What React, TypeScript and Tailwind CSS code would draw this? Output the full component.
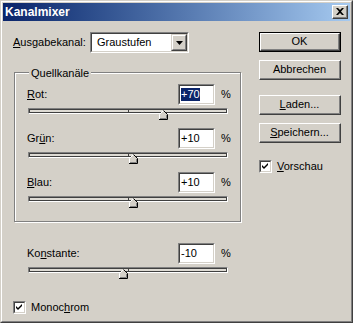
import React from 'react'

const font = { fontFamily: '"Liberation Sans", Arial, sans-serif' }

function U({ children }: { children: React.ReactNode }) {
  return <span className="underline underline-offset-[1px]">{children}</span>
}

function Sunken({ className = '', children }: { className?: string; children?: React.ReactNode }) {
  return (
    <div className={`border border-t-[#808080] border-l-[#808080] border-b-white border-r-white ${className}`}>
      <div className="flex h-full w-full border border-t-[#404040] border-l-[#404040] border-b-[#d4d0c8] border-r-[#d4d0c8] bg-white">{children}</div>
    </div>
  )
}

function Button({ label, def = false }: { label: React.ReactNode; def?: boolean }) {
  const inner = (
    <div className="h-full w-full border border-t-white border-l-white border-b-[#404040] border-r-[#404040]">
      <div className="flex h-full w-full items-center justify-center border-b border-r border-[#808080] text-[11px] text-black">{label}</div>
    </div>
  )
  return def ? <div className="h-[20px] w-[82px] border border-black">{inner}</div> : <div className="h-[20px] w-[82px]">{inner}</div>
}

function Check({ label }: { label: React.ReactNode }) {
  return (
    <div className="flex items-center gap-[5px] text-[11px]">
      <Sunken className="h-[13px] w-[13px]">
        <svg width="9" height="9" viewBox="0 0 9 9" className="m-auto">
          <path d="M1 3 L3 5 L7 1 L7 3 L3 7 L1 5 Z" fill="#000" />
        </svg>
      </Sunken>
      <span>{label}</span>
    </div>
  )
}

function Slider({ value }: { value: number }) {
  const center = 100 + value / 2
  return (
    <div className="h-[23px] pt-[3px] pl-px">
      <div className="relative h-[6px] w-[200px] border border-t-[#808080] border-l-[#808080] border-b-white border-r-white">
        <div className="h-full w-full border border-[#404040] bg-[#dedbd4]" />
        <div className="absolute left-[99px] top-0 h-full w-px bg-[#404040]" />
        <svg width="9" height="10" viewBox="0 0 9 10" className="absolute top-[1px]" style={{ left: center - 5 }}>
          <path d="M0.5 9.5 L0.5 4.5 L4.5 0.5 L8.5 4.5 L8.5 9.5 Z" fill="#d4d0c8" />
          <path d="M0.5 9 L0.5 4.5 L4.5 0.5" fill="none" stroke="#fff" />
          <path d="M4.5 0.5 L8.5 4.5 L8.5 9.5 L0 9.5" fill="none" stroke="#000" />
          <path d="M7.5 5 L7.5 8.5 L1 8.5" fill="none" stroke="#808080" />
        </svg>
      </div>
    </div>
  )
}

function ValueRow({ label, value, selected = false }: { label: React.ReactNode; value: string; selected?: boolean }) {
  return (
    <div className="flex h-[21px] items-center text-[11px]">
      <span className="w-[151px]">{label}</span>
      <Sunken className="h-[21px] w-[37px]">
        <div className="flex items-center pl-[1px]">
          <span className={selected ? 'bg-[#0a246a] leading-[13px] text-white' : 'leading-[13px]'}>{value}</span>
        </div>
      </Sunken>
      <span className="ml-[6px]">%</span>
    </div>
  )
}

export default function App() {
  return (
    <div style={font} className="h-[323px] w-[353px] border border-t-[#d4d0c8] border-l-[#d4d0c8] border-b-[#404040] border-r-[#404040] bg-[#d4d0c8] text-black">
      <div className="h-full w-full border border-t-white border-l-white border-b-[#808080] border-r-[#808080] p-px">
        <div className="flex h-[18px] items-center justify-between bg-gradient-to-r from-[#0a246a] to-[#a6caf0] pl-[2px] pr-[2px]">
          <span className="text-[12px] font-bold text-white">Kanalmixer</span>
          <div className="h-[14px] w-[16px] border border-t-white border-l-white border-b-[#404040] border-r-[#404040] bg-[#d4d0c8]">
            <div className="flex h-full w-full items-center justify-center border-b border-r border-[#808080]">
              <svg width="8" height="7" viewBox="0 0 8 7">
                <path d="M0 0 H2 L4 2 L6 0 H8 L5 3.5 L8 7 H6 L4 5 L2 7 H0 L3 3.5 Z" fill="#000" />
              </svg>
            </div>
          </div>
        </div>

        <div className="flex pl-[10px] pt-[11px]">
          <div className="w-[229px]">
            <div className="flex h-[21px] items-center text-[11px]">
              <span className="w-[77px]"><U>A</U>usgabekanal:</span>
              <Sunken className="h-[21px] w-[99px]">
                <span className="flex-1 self-center pl-[5px]">Graustufen</span>
                <div className="h-full w-[16px] border border-t-[#d4d0c8] border-l-[#d4d0c8] border-b-[#404040] border-r-[#404040] bg-[#d4d0c8]">
                  <div className="flex h-full w-full items-center justify-center border border-t-white border-l-white border-b-[#808080] border-r-[#808080]">
                    <svg width="7" height="4" viewBox="0 0 7 4"><path d="M0 0 H7 L3.5 4 Z" fill="#000" /></svg>
                  </div>
                </div>
              </Sunken>
            </div>

            <div className="relative ml-px mt-[19px] h-[150px] w-[227px] border border-[#808080] pl-[12px] pt-[11px] shadow-[inset_1px_1px_0_#fff,1px_1px_0_#fff]">
              <span className="absolute -top-[8px] left-[14px] bg-[#d4d0c8] px-[2px] text-[11px]">Quellkanäle</span>
              <ValueRow label={<><U>R</U>ot:</>} value="+70" selected />
              <Slider value={70} />
              <ValueRow label={<>Gr<U>ü</U>n:</>} value="+10" />
              <Slider value={10} />
              <ValueRow label={<><U>B</U>lau:</>} value="+10" />
              <Slider value={10} />
            </div>

            <div className="mt-[21px] pl-[14px]">
              <ValueRow label={<>Ko<U>n</U>stante:</>} value="-10" />
              <Slider value={-10} />
            </div>

            <div className="mt-[12px]">
              <Check label={<>Monoc<U>h</U>rom</>} />
            </div>
          </div>

          <div className="ml-[17px] flex flex-col">
            <Button label="OK" def />
            <div className="mt-[8px]"><Button label="Abbrechen" /></div>
            <div className="mt-[15px]"><Button label={<><U>L</U>aden...</>} /></div>
            <div className="mt-[8px]"><Button label={<><U>S</U>peichern...</>} /></div>
            <div className="mt-[15px]"><Check label={<><U>V</U>orschau</>} /></div>
          </div>
        </div>
      </div>
    </div>
  )
}
